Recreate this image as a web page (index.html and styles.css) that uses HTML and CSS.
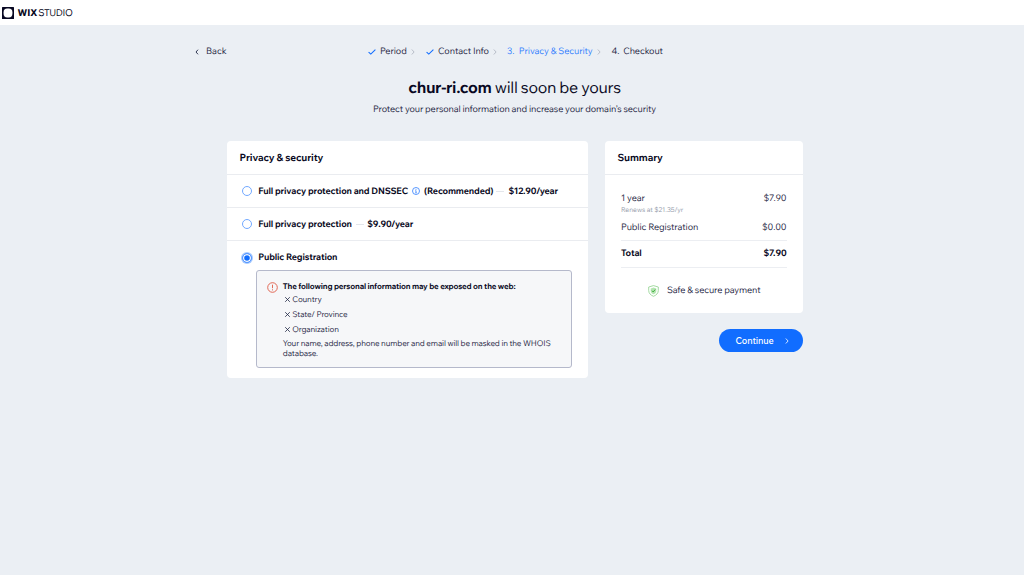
FILE: index.html
```html
<!DOCTYPE html>
<html lang="en">
<head>
<meta charset="utf-8">
<title>Privacy &amp; Security - Wix Studio</title>
<link rel="stylesheet" href="styles.css">
</head>
<body>
<header class="topbar">
  <svg class="logo-mark" viewBox="0 0 12 12"><rect width="12" height="12" rx=".5" fill="#080822"/><rect x="1.6" y="1.6" width="8.8" height="8.8" rx="3.6" fill="#fff"/></svg>
  <span class="logo-wix">WIX</span><span class="logo-studio">STUDIO</span>
</header>
<nav class="steps">
  <a class="back"><svg class="chev-left" viewBox="0 0 4 6"><path d="M3 .7 1 3l2 2.3"/></svg><span>Back</span></a>
  <ol class="crumbs">
    <li class="step-period"><svg class="check" viewBox="0 0 8 6"><path d="M.6 3.1 2.8 5.1 7.4.7"/></svg><span>Period</span><svg class="chev" viewBox="0 0 4 6"><path d="M.8.5 3.1 3 .8 5.5"/></svg></li>
    <li class="step-contact"><svg class="check" viewBox="0 0 8 6"><path d="M.6 3.1 2.8 5.1 7.4.7"/></svg><span>Contact Info</span><svg class="chev" viewBox="0 0 4 6"><path d="M.8.5 3.1 3 .8 5.5"/></svg></li>
    <li class="step-privacy"><span class="num">3.</span><span>Privacy &amp; Security</span><svg class="chev" viewBox="0 0 4 6"><path d="M.8.5 3.1 3 .8 5.5"/></svg></li>
    <li class="step-checkout"><span class="num">4.</span><span>Checkout</span></li>
  </ol>
</nav>
<section class="intro">
  <h1 class="title"><b>chur-ri.com</b> will soon be yours</h1>
  <p class="subtitle">Protect your personal information and increase your domain’s security</p>
</section>
<main class="columns">
  <section class="card options">
    <h2 class="card-head">Privacy &amp; security</h2>
    <div class="row">
      <span class="radio"></span><span class="label">Full privacy protection and DNSSEC</span>
      <svg class="info" viewBox="0 0 8 8"><circle cx="4" cy="4" r="3.5"/><path d="M4 3.6v2.1M3.4 3.7H4M3.3 5.8h1.4M4 2v.8"/></svg>
      <span class="label">(Recommended)</span><i class="dash"></i><span class="label">$12.90/year</span>
    </div>
    <div class="row">
      <span class="radio"></span><span class="label">Full privacy protection</span><i class="dash dash-wide"></i><span class="label">$9.90/year</span>
    </div>
    <div class="row row-last"><span class="radio radio-on"></span><span class="label">Public Registration</span></div>
    <div class="notice">
      <svg class="warn" viewBox="0 0 11 11"><circle cx="5.5" cy="5.5" r="4.8"/><path d="M5.5 2.7v3.5M5.5 7.3v1.1"/></svg>
      <div class="notice-body">
        <strong class="notice-title">The following personal information may be exposed on the web:</strong>
        <ul class="exposed">
          <li><svg class="x" viewBox="0 0 5 5"><path d="m.2.2 4.600 4.600M4.800.2.2 4.800"/></svg><span>Country</span></li>
          <li><svg class="x" viewBox="0 0 5 5"><path d="m.2.2 4.600 4.600M4.800.2.2 4.800"/></svg><span>State/ Province</span></li>
          <li><svg class="x" viewBox="0 0 5 5"><path d="m.2.2 4.600 4.600M4.800.2.2 4.800"/></svg><span>Organization</span></li>
        </ul>
        <p class="masked">Your name, address, phone number and email will be masked in the WHOIS<br>database.</p>
      </div>
    </div>
  </section>
  <aside class="side">
    <section class="card summary">
      <h2 class="card-head">Summary</h2>
      <div class="lines">
        <div class="line"><span>1 year</span><span>$7.90</span></div>
        <small class="renews">Renews at $21.35/yr</small>
        <div class="line line-public"><span>Public Registration</span><span>$0.00</span></div>
        <div class="line total"><span>Total</span><span>$7.90</span></div>
      </div>
      <div class="secure">
        <svg class="shield" viewBox="0 0 11 12"><path class="shield-edge" d="M5.5.6 10.3 2v3.5c0 2.700-1.900 4.700-4.800 5.800C2.600 10.200.7 8.200.7 5.500V2Z"/><path class="shield-core" d="M5.500 2.600 8.300 3.500v2.200c0 1.700-1.100 2.800-2.800 3.600-1.700-.8-2.800-1.900-2.800-3.600V3.500Z"/><path class="shield-tick" d="m4 5.700 1.200 1.300 2-2.500"/></svg>
        <span>Safe &amp; secure payment</span>
      </div>
    </section>
    <button class="continue"><span>Continue</span><svg class="chev-btn" viewBox="0 0 4 6"><path d="M.8.5 3.100 3 .8 5.500"/></svg></button>
  </aside>
</main>
</body>
</html>
```
FILE: styles.css
```css
* { box-sizing: border-box; margin: 0; padding: 0; }
body { background: #ebeff4; color: #1d2442; font: 9px/12px "Wix Madefor Text", Inter, "Noto Sans", sans-serif; letter-spacing: -.12px; white-space: nowrap; text-rendering: geometricPrecision; }
svg { display: block; flex: none; fill: none; overflow: visible; }
ol, ul { list-style: none; }
b, strong { font-weight: 700; }
.topbar { height: 25px; background: #fff; display: flex; align-items: center; padding: 0 0 0 2px; color: #080822; }
.logo-mark { width: 12px; height: 12px; }
.logo-wix { font-size: 9.500px; font-weight: 800; margin-left: 3.500px; letter-spacing: 0; padding-top: 1px; }
.logo-studio { font-size: 9.500px; font-weight: 300; margin-left: .8px; letter-spacing: -.4px; padding-top: 1px; }
.steps { display: flex; height: 52px; padding: 1px 0 0 194.500px; align-items: center; }
.back { display: flex; align-items: center; width: 173px; gap: 7.500px; letter-spacing: 0; }
.back span, .crumbs span { padding-top: 1px; }
.chev-left { width: 4px; height: 6px; stroke: #1d2442; stroke-width: .9; }
.crumbs { display: flex; letter-spacing: -.1px; }
.crumbs li { display: flex; align-items: center; }
.check { width: 8px; height: 6px; stroke: #116dff; stroke-width: 1.1; margin-right: 4.500px; }
.chev { width: 4px; height: 6px; stroke: #a9b0bd; stroke-width: .8; margin-left: 4px; }
.step-period { width: 58px; }
.step-contact { width: 81.500px; }
.step-privacy { width: 104.500px; color: #2f7dff; }
.num { width: 11.800px; flex: none; }
.intro { text-align: center; padding: 1px 0 0 5px; height: 64px; }
.title { font-size: 16px; line-height: 20px; font-weight: 400; color: #080822; letter-spacing: -.33px; }
.subtitle { margin-top: 6px; }
.columns { display: flex; align-items: flex-start; gap: 16.500px; padding-left: 226.500px; }
.card { background: #fff; border-radius: 4px; }
.options { width: 361.500px; height: 237px; }
.card-head { height: 34px; border-bottom: 1px solid #eaecf0; display: flex; align-items: center; padding-left: 13px; font-size: 10px; font-weight: 700; color: #080822; }
.row { height: 33px; display: flex; align-items: center; border-bottom: 1px solid #eaecf0; padding: 0 0 0 15.500px; font-weight: 700; color: #080822; letter-spacing: -.15px; }
.label { padding-top: 1px; }
.row-last { border: 0; height: 33px; }
.radio { width: 10px; height: 10px; flex: none; border: 1px solid #72a9ff; border-radius: 50%; margin-right: 6.200px; }
.radio-on { background: #116dff; border: 1px solid #5c9bff; box-shadow: inset 0 0 0 1.200px #fff, 0 0 0 1px #a9ccff; }
.info { width: 8px; height: 8px; stroke: #2f7dff; stroke-width: .8; margin: 0 4px; }
.dash { width: 8px; height: 1px; background: #e3e6eb; margin: 0 4px 0 3px; }
.dash-wide { margin: 0 3.500px 0 4px; }
.notice { display: flex; width: 316px; height: 98px; margin: -4px 0 0 29.300px; padding: 9px 0 0 10.500px; border: 1px solid #b5b9cb; border-radius: 3px; background: #f6f7f9; }
.warn { width: 11px; height: 11px; margin: 2px 4.500px 0 0; stroke: #df5a45; stroke-width: .9; }
.notice-body { font-size: 8px; line-height: 12px; letter-spacing: -.15px; padding-top: 1px; }
.notice-title { display: block; color: #080822; letter-spacing: -.18px; }
.exposed li { display: flex; align-items: center; height: 14.700px; gap: 2.500px; padding-left: 2px; }
.x { width: 5px; height: 5px; stroke: #1d2442; stroke-width: .8; margin-bottom: 1px; }
.masked { line-height: 10px; margin-top: 2px; }
.side { width: 198px; display: flex; flex-direction: column; align-items: flex-end; }
.summary { width: 198px; height: 172px; }
.lines { padding: 18px 16px 0 16.500px; }
.line { display: flex; justify-content: space-between; }
.renews { display: block; font-size: 6.700px; line-height: 10px; color: #9299a9; letter-spacing: -.03px; margin-top: -.5px; }
.line-public { padding: 7px 0 0; height: 25.500px; }
.total { height: 27.500px; border: solid #eceef2; border-width: 1px 0; align-items: center; font-weight: 700; color: #080822; padding-top: 1px; }
.secure { display: flex; align-items: center; justify-content: center; gap: 8px; margin-top: 17px; padding-left: 1.500px; }
.shield { width: 11px; height: 12px; margin-bottom: 1px; }
.shield-edge { stroke: #8dd08a; stroke-width: .8; }
.shield-core { fill: #b4e5b1; }
.shield-tick { stroke: #35a834; stroke-width: .9; }
.continue { width: 83.500px; height: 23px; margin-top: 16.400px; border: 0; border-radius: 12px; background: #116dff; color: #fff; display: flex; align-items: center; padding-left: 16.500px; font: 500 9px/12px "Wix Madefor Text", Inter, sans-serif; letter-spacing: -.1px; }
.chev-btn { width: 4px; height: 6px; stroke: #fff; stroke-width: .8; margin-left: 11px; }
```
